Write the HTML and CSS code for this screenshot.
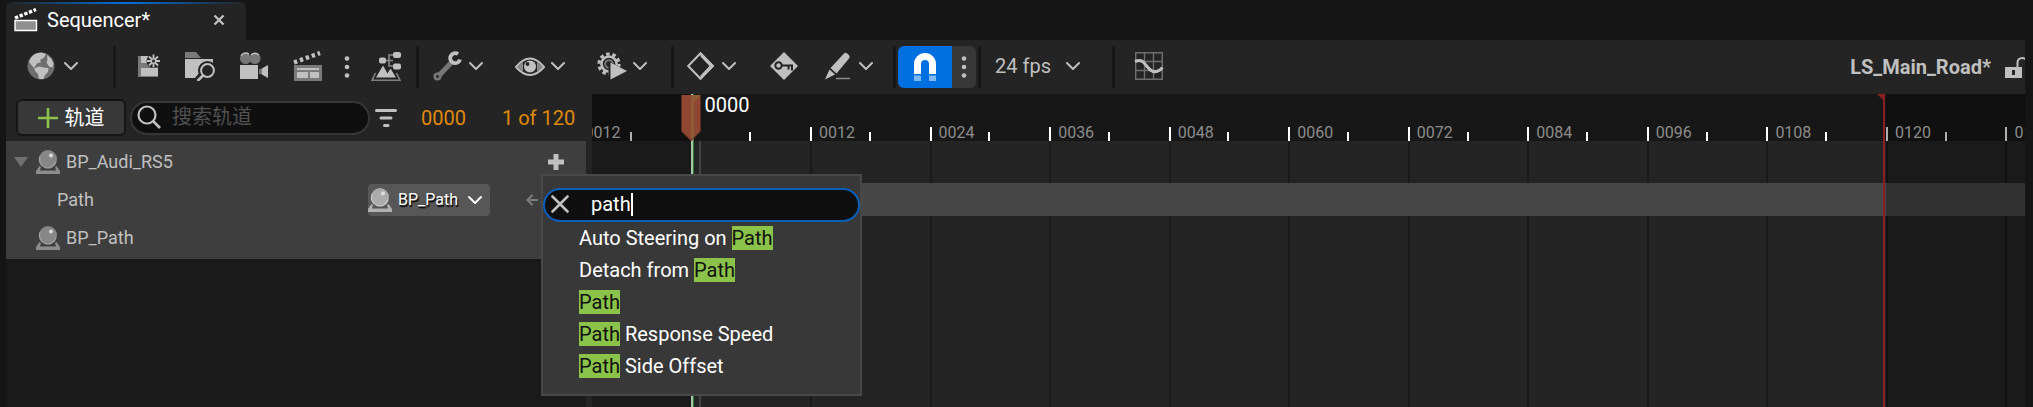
FILE: index.html
```html
<!DOCTYPE html>
<html lang="zh-CN">
<head>
<meta charset="utf-8">
<title>Sequencer</title>
<link rel="stylesheet" href="styles.css">
</head>
<body>
<svg class="defs" aria-hidden="true">
  <symbol id="chev" viewBox="0 0 14 14"><path d="M1 4l6 6 6-6" fill="none" stroke="currentColor" stroke-width="2" stroke-linecap="round" stroke-linejoin="round"/></symbol>
  <symbol id="dots" viewBox="0 0 6 24"><circle cx="3" cy="3.500" r="2.300"/><circle cx="3" cy="12" r="2.300"/><circle cx="3" cy="20.500" r="2.300"/></symbol>
  <symbol id="actor" viewBox="0 0 24 24"><path d="M3.500 16L0 21v3h24v-3l-3.500-5-1.500 1 1 3.500H4L5 17z" opacity=".8"/><circle cx="12" cy="9" r="9" opacity=".75"/><path d="M4 6.500a8.400 8.400 0 1 0 16 5" fill="none" stroke="currentColor" stroke-width="1.300"/><circle cx="15" cy="5.500" r="1.900" fill="#ddd"/></symbol>
</svg>
<div class="app">
  <header class="tabs">
    <div class="tab">
      <svg class="tab-icon" viewBox="0 0 24 24"><path d="M1 10L22 1.500" stroke="#fff" stroke-width="3.400" stroke-dasharray="3.400 1.600" fill="none"/><path d="M1 12.500h21.500v10H1z" fill="#8f8f8f" stroke="#fff" stroke-width="1.400"/></svg>
      <span class="tab-title">Sequencer*</span>
      <button class="tab-close" aria-label="Close"><svg viewBox="0 0 12 12"><path d="M1.500 1.500l9 9M10.500 1.500l-9 9" stroke="currentColor" stroke-width="2.400"/></svg></button>
    </div>
  </header>

  <div class="toolbar">
    <button class="combo world" aria-label="World">
      <svg class="ic" viewBox="0 0 30 30"><circle cx="15" cy="15" r="13.500" fill="#6e6e6e"/><path d="M5 6.500Q9 1.800 15 1.600L20 3l-2 3.500-4 2.500 1 2-4 1.500-3 4.500L3 11zM8.500 17l5-1.500 4 1 5 .5-.5 4-3 3-1.500 4h-4.500l-1-5-3-3zM21 4l4 3.500 2.500 5-1 4-3.500-1-2.500-4 1-3z" fill="#c0c0c0"/></svg>
      <svg class="chev"><use href="#chev"/></svg>
    </button>
    <span class="sep"></span>
    <div class="group">
      <button class="tool save" aria-label="Save"><svg class="ic" viewBox="0 0 30 30"><path d="M4 5h20v21H4z" fill="#7a7a7a"/><path d="M7 5h9v7H7zM7 17h17v8H7z" fill="#c0c0c0"/><circle cx="19.500" cy="10" r="7" fill="#242424"/><path d="M19.500 3.500v13M13 10h13M15 5.500l9 9M24 5.500l-9 9" stroke="#c0c0c0" stroke-width="1.900"/><circle cx="19.500" cy="10" r="1.500" fill="#242424"/></svg></button>
      <button class="tool" aria-label="Browse"><svg class="ic" viewBox="0 0 30 30"><path d="M0 1h11l5 6H0z" fill="#7a7a7a"/><path d="M0 8h28v19H0z" fill="#c0c0c0"/><circle cx="22.500" cy="19.500" r="9.500" fill="#242424"/><path d="M12 30l5-6" stroke="#242424" stroke-width="7"/><circle cx="22.500" cy="19.500" r="6.400" fill="none" stroke="#c0c0c0" stroke-width="2"/><path d="M18 24.500L12.500 30" stroke="#c0c0c0" stroke-width="2.600"/></svg></button>
      <button class="tool" aria-label="Camera"><svg class="ic" viewBox="0 0 30 30"><circle cx="6.500" cy="7.500" r="5.500" fill="#777"/><circle cx="16" cy="7.500" r="5.500" fill="#777"/><path d="M2 5a5.500 5.500 0 0 1 8-2M12 4a5.500 5.500 0 0 1 8 0" stroke="#c0c0c0" stroke-width="1.300" fill="none"/><path d="M1 14h18v14H1zM29 14v13l-7-4v-5z" fill="#c0c0c0"/><path d="M20 18h3v5h-3z" fill="#777"/></svg></button>
      <button class="tool" aria-label="Render movie"><svg class="ic" viewBox="0 0 30 30"><path d="M1 11.500L27 2" stroke="#c0c0c0" stroke-width="4.400" stroke-dasharray="3.400 2.900" fill="none"/><path d="M1 14h28v16H1z" fill="#7a7a7a"/><path d="M4 17h22v2H4zM4 21h11v6H4zM17 21h9v6h-9z" fill="#c0c0c0"/></svg></button>
      <button class="more" aria-label="Render options"><svg class="dots"><use href="#dots"/></svg></button>
      <button class="tool" aria-label="Blueprint"><svg class="ic" viewBox="0 0 30 30"><path d="M14 9.500h8M18 9.500V4h4M18 9.500V15h4" stroke="#8a8a8a" stroke-width="1.600" fill="none"/><rect x="8" y="6.500" width="7" height="6" rx="2" fill="#c0c0c0"/><rect x="22" y="1" width="8" height="6" rx="2" fill="#c0c0c0"/><rect x="22" y="12.500" width="8" height="6" rx="2" fill="#c0c0c0"/><path d="M5 26.500l7-12 4.500 8 3-5 5.500 9z" fill="#c0c0c0"/><path d="M4.500 22L1 29.300h28L25.500 22" stroke="#808080" stroke-width="1.600" fill="none"/></svg></button>
    </div>
    <span class="sep"></span>
    <div class="group">
      <button class="combo" aria-label="Actions">
        <svg class="ic" viewBox="0 0 30 30"><path d="M18 12L5 25.500" stroke="#777" stroke-width="5"/><circle cx="4.500" cy="25.500" r="4" fill="#777"/><circle cx="4.500" cy="25.500" r="1.400" fill="#242424"/><path d="M25 3a5 5 0 1 0 2 5.500" stroke="#c0c0c0" stroke-width="3.800" fill="none"/></svg>
        <svg class="chev"><use href="#chev"/></svg></button>
      <button class="combo" aria-label="View options">
        <svg class="ic" viewBox="0 0 30 30"><path d="M1 16Q8 7.500 15 7.500T29 16Q22 24 15 24T1 16z" fill="none" stroke="#c0c0c0" stroke-width="2"/><path d="M2 16l6-5v10zM28 16l-6-5v10z" fill="#8a8a8a"/><circle cx="15" cy="15.500" r="6" fill="#c0c0c0"/><circle cx="12.500" cy="13" r="1.900" fill="#242424"/></svg>
        <svg class="chev"><use href="#chev"/></svg></button>
      <button class="combo" aria-label="Playback options">
        <svg class="ic" viewBox="0 0 30 30"><circle cx="12" cy="13" r="10" fill="none" stroke="#c0c0c0" stroke-width="3.200" stroke-dasharray="3.500 2.780"/><circle cx="12" cy="13" r="7.500" fill="none" stroke="#c0c0c0" stroke-width="2.600"/><circle cx="12" cy="13" r="3.800" fill="none" stroke="#777" stroke-width="2"/><path d="M11.500 10v20L30 20z" fill="#242424"/><path d="M13.500 11.500v17L30 20z" fill="#c0c0c0"/></svg>
        <svg class="chev"><use href="#chev"/></svg></button>
    </div>
    <span class="sep"></span>
    <div class="group keys">
      <button class="combo" aria-label="Key options">
        <svg class="ic" viewBox="0 0 30 30"><path d="M14.500 2.200L2.200 15l12.300 12.800L26.800 15z" fill="none" stroke="#c0c0c0" stroke-width="2"/><path d="M14.500 1L28.200 15 14.500 29v-4.500L23.500 15l-9-9.500z" fill="#c0c0c0"/></svg>
        <svg class="chev"><use href="#chev"/></svg></button>
      <button class="tool" aria-label="Auto key"><svg class="ic" viewBox="0 0 30 30"><path d="M15 1l14 14-14 14L1 15z" fill="#c0c0c0"/><circle cx="9.500" cy="14.500" r="3.200" fill="none" stroke="#242424" stroke-width="2"/><path d="M12.500 14.500H23v5M19.500 14.500v4" stroke="#242424" stroke-width="2" fill="none"/></svg></button>
      <button class="combo edit" aria-label="Edit options">
        <svg class="ic" viewBox="0 0 30 30"><path d="M21 2.500q1.500-1.500 3.200 0l1.800 1.800q1.500 1.600 0 3.300L13.500 22.500 7.500 17z" fill="#c0c0c0"/><path d="M6.500 18.500l5.500 5L2 28.500z" fill="#c0c0c0"/><path d="M13 27.500h14" stroke="#8a8a8a" stroke-width="1.500"/></svg>
        <svg class="chev"><use href="#chev"/></svg></button>
    </div>
    <span class="sep tight"></span>
    <div class="snap">
      <button class="magnet" aria-label="Snapping"><svg class="ic" viewBox="0 0 30 30"><path d="M7.500 22V12a7.500 7.500 0 0 1 15 0v10" fill="none" stroke="#fff" stroke-width="7"/><path d="M4 23.500h7V29H4zM19 23.500h7V29h-7z" fill="#7fb7f0"/></svg></button>
      <button class="snap-more" aria-label="Snapping options"><svg class="dots"><use href="#dots"/></svg></button>
    </div>
    <span class="sep tight"></span>
    <button class="fps"><span>24 fps</span><svg class="chev"><use href="#chev"/></svg></button>
    <span class="sep"></span>
    <button class="tool curve" aria-label="Curve editor"><svg class="ic" viewBox="0 0 30 30"><path d="M1.700 1.700h26.600v26.600H1.700zM10.500 1v28M19.500 1v28M1 10.500h28M1 19.500h28" fill="none" stroke="#6e6e6e" stroke-width="1.400"/><path d="M1 10.500c7-3 9 1 12 5s8 9 15.500 1" fill="none" stroke="#c0c0c0" stroke-width="3"/></svg></button>
    <div class="crumb"><span>LS_Main_Road*</span>
      <button class="lock" aria-label="Unlocked"><svg viewBox="0 0 20 22"><path d="M12.500 11V6.500a4.600 4.600 0 0 1 9.200 0V9" fill="none" stroke="#c0c0c0" stroke-width="2"/><path d="M0 11h17v11H0z" fill="#c0c0c0"/><path d="M7 14h3v5H7z" fill="#242424"/></svg></button>
    </div>
  </div>

  <main class="body">
    <section class="outliner">
      <div class="filterbar">
        <button class="add"><svg viewBox="0 0 20 20"><path d="M10 0v20M0 10h20" stroke="#8bc34a" stroke-width="2.600"/></svg><span>轨道</span></button>
        <label class="search"><svg viewBox="0 0 24 24"><circle cx="10" cy="10" r="8.500" fill="none" stroke="#c0c0c0" stroke-width="2.200"/><path d="M16 16l7 7" stroke="#c0c0c0" stroke-width="2.600"/></svg><input type="text" placeholder="搜索轨道" aria-label="搜索轨道"></label>
        <button class="filter" aria-label="Filter"><svg viewBox="0 0 24 20"><path d="M2.500 2.500h19M7 10h10M10.500 17.500h3.500" stroke="#c0c0c0" stroke-width="3" stroke-linecap="round"/></svg></button>
        <span class="frame">0000</span>
        <span class="count">1 of 120</span>
      </div>
      <div class="tree">
        <div class="row">
          <svg class="expand" viewBox="0 0 16 10"><path d="M1 0h14l-7 10z" fill="#707070"/></svg>
          <svg class="actor"><use href="#actor"/></svg><span>BP_Audi_RS5</span>
          <button class="plus" aria-label="Add track"><svg viewBox="0 0 18 18"><path d="M9 1v16M1 9h16" stroke="#c0c0c0" stroke-width="5"/></svg></button>
        </div>
        <div class="row sub">
          <span>Path</span>
          <button class="picker"><svg class="actor"><use href="#actor"/></svg><span>BP_Path</span><svg class="chev"><use href="#chev"/></svg></button>
          <button class="prev" aria-label="Previous key"><svg viewBox="0 0 12 12"><path d="M6.500 1L1.500 6l5 5M2 6h10" stroke="#7a7a7a" stroke-width="2.200" fill="none"/></svg></button>
        </div>
        <div class="row leaf"><svg class="actor"><use href="#actor"/></svg><span>BP_Path</span></div>
      </div>
    </section>

    <section class="timeline">
      <div class="cells">
        <div class="cell out"><b>-0012</b></div>
        <div class="cell"><b></b></div>
        <div class="cell"><b>0012</b></div>
        <div class="cell"><b>0024</b></div>
        <div class="cell"><b>0036</b></div>
        <div class="cell"><b>0048</b></div>
        <div class="cell"><b>0060</b></div>
        <div class="cell"><b>0072</b></div>
        <div class="cell"><b>0084</b></div>
        <div class="cell"><b>0096</b></div>
        <div class="cell"><b>0108</b></div>
        <div class="cell out end"><b>0120</b></div>
        <div class="cell out"><b>0132</b></div>
      </div>
      <div class="overlay">
        <div class="playhead">
          <svg class="scrub" viewBox="0 0 20 47"><path d="M0 1h20v36L10 47 0 37z" fill="#8f4632"/><path d="M10 1h10L13 8v39h-3z" fill="#8f6a38" opacity=".6"/><path d="M.5 1v36L10 46.500l9.500-9.500V1" fill="none" stroke="#5e2c1f"/></svg>
          <span class="time">0000</span>
        </div>
      </div>
    </section>
  </main>

  <div class="popup">
    <label class="popup-search">
      <svg viewBox="0 0 18 18"><path d="M1.500 1.500l15 15M16.500 1.500l-15 15" stroke="#c0c0c0" stroke-width="2.600" stroke-linecap="round"/></svg>
      <input type="text" value="path" size="1" aria-label="Search"><i class="caret"></i>
    </label>
    <button class="item">Auto Steering on <mark>Path</mark></button>
    <button class="item">Detach from <mark>Path</mark></button>
    <button class="item"><mark>Path</mark></button>
    <button class="item"><mark>Path</mark> Response Speed</button>
    <button class="item"><mark>Path</mark> Side Offset</button>
  </div>
</div>
</body>
</html>
```

FILE: styles.css
```css
* { box-sizing: border-box; }
body {
  margin: 0;
  background: #151515;
  color: #c0c0c0;
  font: 20px/24px Roboto, "Noto Sans CJK SC", sans-serif;
}
button {
  margin: 0; padding: 0; border: 0;
  background: none; color: inherit; font: inherit;
  display: flex; align-items: center;
  flex: none;
}
input { font: inherit; border: 0; padding: 0; background: none; outline: 0; min-width: 0; }
svg { display: block; flex: none; fill: currentColor; }
.defs { position: absolute; width: 0; height: 0; }

.app { position: relative; display: flex; flex-direction: column; min-height: 100vh; padding: 2px 8px 0 6px; }

/* Tab strip */
.tabs { display: flex; }
.tab {
  display: flex; align-items: center;
  width: 240px; height: 38px; padding: 0 21px 2px 8px;
  background: linear-gradient(90deg, #242424, #0070e0 50%, #242424) top / 100% 2px no-repeat #242424;
  border-radius: 6px 6px 0 0;
}
.tab-icon { width: 24px; height: 24px; margin-right: 9px; }
.tab-title { flex: 1; color: #fff; }
.tab-close svg { width: 12px; height: 12px; }

/* Toolbar */
.toolbar { display: flex; align-items: center; height: 54px; padding-left: 20px; background: #242424; }
.group { display: flex; }
.ic { width: 30px; height: 30px; }
.chev { width: 14px; height: 14px; }
.dots { width: 6px; height: 24px; }
.sep { flex: none; width: 3px; height: 42px; margin: 0 3px; background: #171717; }
.sep.tight { margin: 0 2px; }
.tool, .combo, .fps { height: 42px; padding-bottom: 2px; }
.tool { width: 54px; justify-content: center; }
.tool.save { padding-left: 6px; }
.more { width: 24px; height: 42px; justify-content: center; }
.combo { width: 82px; padding-left: 11px; gap: 6px; }
.combo.world { width: 84px; padding-left: 0; gap: 8px; }
.keys .combo { padding-left: 9px; }
.keys .tool { width: 50px; }
.keys .combo.edit { padding-left: 14px; }
.snap { display: flex; height: 42px; border-radius: 6px; overflow: hidden; background: #383838; }
.magnet { width: 54px; justify-content: center; background: #0070e0; }
.snap-more { width: 24px; justify-content: center; }
.fps { width: 126px; padding-left: 12px; gap: 15px; }
.curve { width: 62px; }
.crumb { display: flex; align-items: center; gap: 14px; margin-left: auto; font-weight: 700; }
.lock svg { width: 20px; height: 22px; }

/* Outliner */
.body { display: flex; flex: 1; background: #242424; }
.outliner { flex: none; width: 586px; display: flex; flex-direction: column; background: #242424; }
.filterbar { display: flex; align-items: center; height: 47px; padding-left: 10px; }
.add {
  width: 110px; height: 37px; justify-content: center; gap: 7px;
  border: 2px solid #151515; border-radius: 6px; background: #383838; color: #fff;
}
.add svg { width: 20px; height: 20px; }
.search {
  display: flex; align-items: center; gap: 11px;
  width: 240px; height: 34px; margin-left: 4px; padding: 0 0 2px 5px;
  border: 2px solid #363636; border-radius: 17px; background: #0f0f0f;
}
.search svg { width: 24px; height: 24px; }
.search input { flex: 1; color: #c0c0c0; }
.search input::placeholder { color: #505050; }
.filter { margin-left: 4px; }
.filter svg { width: 24px; height: 20px; }
.frame, .count { color: #e08a0c; }
.frame { margin-left: 23px; }
.count { margin-left: 36px; }

.tree { flex: 1; width: 580px; background: #1a1a1a; font-size: 18px; }
.row { display: flex; align-items: center; height: 42px; padding: 0 21px 0 6px; background: #3e3e3e; }
.expand { width: 16px; height: 10px; margin: 0 7px 0 1px; }
.actor { width: 24px; height: 24px; margin-right: 6px; color: #a0a0a0; }
.plus { margin-left: auto; }
.plus svg { width: 18px; height: 18px; }
.row.sub { height: 33px; padding: 0 48px 0 51px; }
.picker {
  width: 122px; height: 32px; margin-left: auto;
  border-radius: 4px; background: #575757;
  color: #fff; font-size: 16px; text-shadow: 1px 2px 1px #000;
}
.picker .actor { color: #c8c8c8; }
.picker .chev { margin-left: 10px; }
.prev { margin-left: 36px; }
.prev svg { width: 12px; height: 12px; }
.row.leaf { height: 43px; padding-left: 30px; }

/* Timeline */
.timeline { flex: 1; min-width: 0; overflow: hidden; display: grid; background: #1a1a1a; }
.cells, .overlay { grid-area: 1 / 1; margin: 0 -100px 0 -21px; display: grid; grid-template-columns: repeat(13, minmax(0, 1fr)); }
.cell {
  background:
    linear-gradient(#fff, #fff) 0 33px / 2px 14px no-repeat,
    linear-gradient(#fff, #fff) 50% 38px / 2px 9px no-repeat,
    linear-gradient(#171717, #171717) 0 0 / 100% 47px no-repeat,
    linear-gradient(#474747, #474747) 0 89px / 100% 33px no-repeat,
    linear-gradient(#1a1a1a, #1a1a1a) 0 0 / 2px 100% no-repeat,
    #242424;
}
.cell.out {
  background:
    linear-gradient(#b0b0b0, #b0b0b0) 0 33px / 2px 14px no-repeat,
    linear-gradient(#b0b0b0, #b0b0b0) 50% 38px / 2px 9px no-repeat,
    linear-gradient(#101010, #101010) 0 0 / 100% 47px no-repeat,
    linear-gradient(#323232, #323232) 0 89px / 100% 33px no-repeat,
    linear-gradient(#121212, #121212) 0 0 / 2px 100% no-repeat,
    #1a1a1a;
}
.cell b { display: block; padding: 31px 0 0 9px; font-size: 16px; line-height: 16px; font-weight: 400; color: #8c8c8c; }
.cell.end { position: relative; }
.cell.end::before {
  content: ""; position: absolute; left: -3px; top: 0; bottom: 0; width: 2px; background: #8a1f1f;
}
.cell.end::after {
  content: ""; position: absolute; left: -9px; top: 0; border: 4px solid; border-color: #8a1f1f #8a1f1f transparent transparent;
}
.playhead {
  grid-column: 2;
  display: flex; gap: 4px;
  background:
    linear-gradient(90deg, #a9c4a6 67%, #2f7a37 67%) 0 0 / 3px 100% no-repeat,
    linear-gradient(#444, #444) 8px 47px / 2px 100% no-repeat;
}
.scrub { width: 20px; height: 47px; margin-left: -10px; }
.time { color: #fff; line-height: 22px; }

/* Track search popup */
.popup {
  position: absolute; left: 541px; top: 174px; width: 321px; height: 222px;
  display: flex; flex-direction: column;
  padding-top: 12px; background: #383838; border: 2px solid #484848; color: #fff;
}
.popup-search {
  display: flex; align-items: center;
  height: 34px; padding: 0 0 2px 6px;
  border: 2px solid #0c5fb8; border-radius: 17px; background: #0f0f0f;
}
.popup-search svg { width: 18px; height: 18px; margin-right: 22px; }
.popup-search input { color: #fff; field-sizing: content; caret-color: transparent; }
.caret { width: 2px; height: 23px; background: #fff; }
.item { height: 32px; padding-left: 36px; white-space: pre; }
mark { background: #8bc34a; color: #111; }
```
